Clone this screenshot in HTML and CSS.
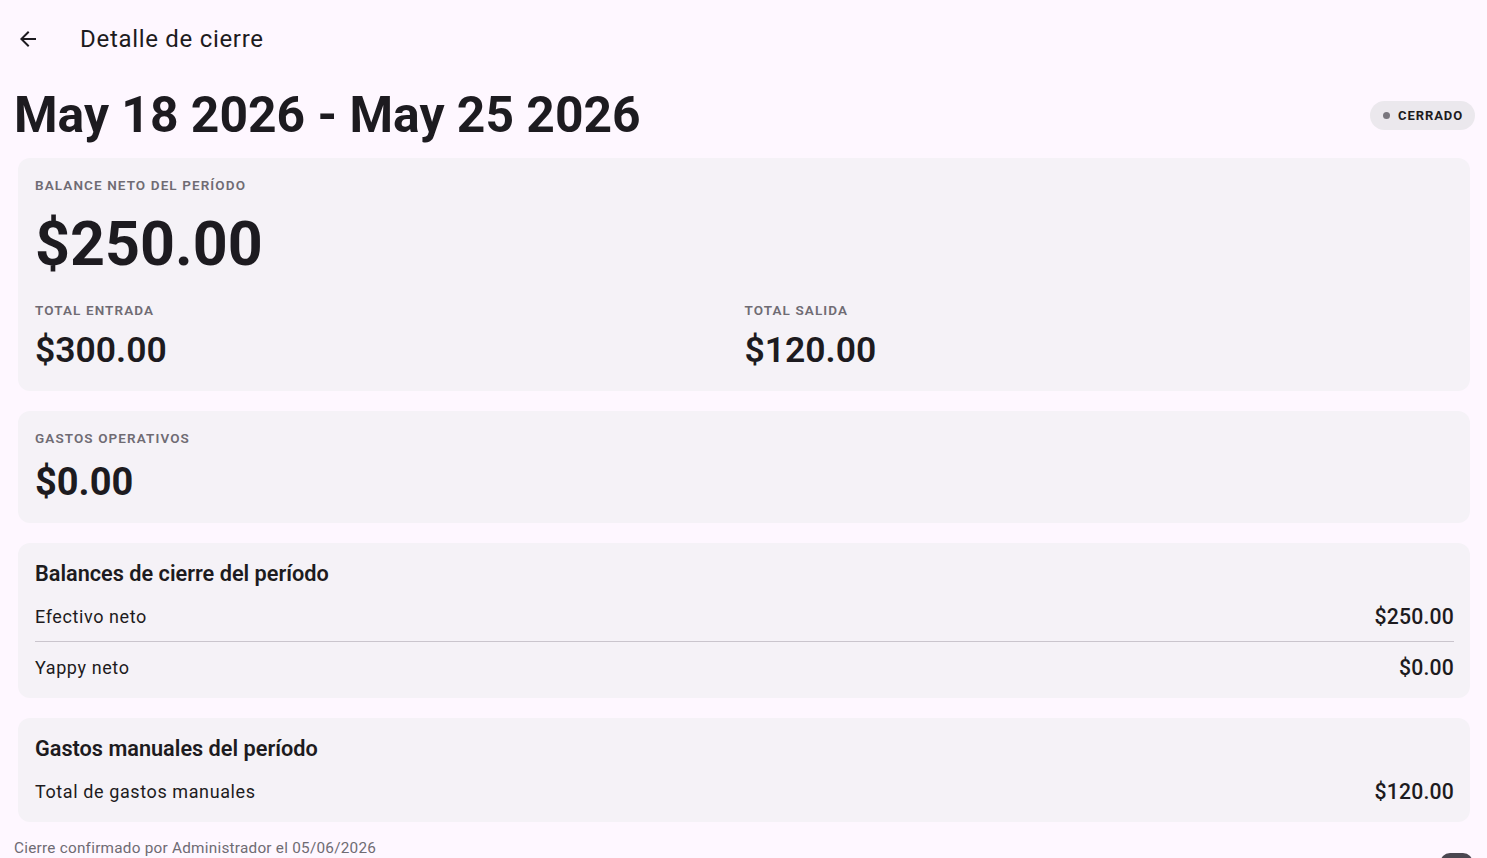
FILE: index.html
```html
<!DOCTYPE html>
<html lang="es">
<head>
<meta charset="utf-8">
<title>Detalle de cierre</title>
<link rel="stylesheet" href="styles.css">
</head>
<body>
<header class="appbar">
  <button class="back" aria-label="Volver">
    <svg width="24" height="24" viewBox="0 0 24 24"><path d="M20 11H7.83l5.59-5.59L12 4l-8 8 8 8 1.41-1.41L7.83 13H20v-2z" fill="#1d1b20"/></svg>
  </button>
  <h1 class="appbar-title">Detalle de cierre</h1>
</header>
<main class="content">
  <div class="period-row">
    <h2 class="period">May 18 2026 - May 25 2026</h2>
    <span class="badge"><span class="dot"></span>CERRADO</span>
  </div>

  <section class="card card-main">
    <div class="label">BALANCE NETO DEL PERÍODO</div>
    <div class="big-amount">$250.00</div>
    <div class="totals">
      <div class="total">
        <div class="label">TOTAL ENTRADA</div>
        <div class="mid-amount">$300.00</div>
      </div>
      <div class="total">
        <div class="label">TOTAL SALIDA</div>
        <div class="mid-amount">$120.00</div>
      </div>
    </div>
  </section>

  <section class="card card-ops">
    <div class="label">GASTOS OPERATIVOS</div>
    <div class="ops-amount">$0.00</div>
  </section>

  <section class="card card-list">
    <h3 class="card-title">Balances de cierre del período</h3>
    <div class="row"><span class="row-label">Efectivo neto</span><span class="row-value">$250.00</span></div>
    <div class="divider"></div>
    <div class="row"><span class="row-label">Yappy neto</span><span class="row-value">$0.00</span></div>
  </section>

  <section class="card card-list card-last">
    <h3 class="card-title">Gastos manuales del período</h3>
    <div class="row"><span class="row-label">Total de gastos manuales</span><span class="row-value">$120.00</span></div>
  </section>

  <p class="footer">Cierre confirmado por Administrador el 05/06/2026</p>
</main>
<div class="corner-fab"></div>
</body>
</html>
```

FILE: styles.css
```css
* { box-sizing: border-box; }
html, body {
  margin: 0;
  padding: 0;
  background: #fef7ff;
  font-family: Roboto, "Noto Sans", sans-serif;
  color: #1d1b20;
  overflow: hidden;
  height: 858px;
}
.appbar {
  height: 76px;
  display: flex;
  align-items: center;
  padding-left: 16px;
  padding-top: 1px;
}
.back {
  width: 24px;
  height: 24px;
  padding: 0;
  border: 0;
  background: none;
  display: flex;
}
.appbar-title {
  margin: 0 0 0 40px;
  font-size: 24px;
  font-weight: 400;
  letter-spacing: 0.7px;
  line-height: 28px;
}
.content {
  padding: 0 14px;
}
.period-row {
  display: flex;
  justify-content: space-between;
  align-items: center;
  height: 78px;
}
.period {
  margin: 0;
  font-size: 49.8px;
  font-weight: 700;
  line-height: 60px;
}
.badge {
  display: inline-flex;
  align-items: center;
  height: 29px;
  padding: 0 12px 0 13px;
  margin-right: -2px;
  border-radius: 15px;
  background: #ebe8ed;
  font-size: 13px;
  font-weight: 700;
  letter-spacing: 0.9px;
  color: #1d1b20;
}
.dot {
  width: 7px;
  height: 7px;
  border-radius: 50%;
  background: #79767d;
  margin-right: 8px;
}
.card {
  margin: 4px 3px 20px 4px;
  background: #f5f2f7;
  border-radius: 12px;
  padding: 17px 16px 0 17px;
}
.card-last { margin-bottom: 16px; }
.label {
  font-size: 13.5px;
  font-weight: 600;
  letter-spacing: 1.1px;
  line-height: 20px;
  color: #6f6b73;
}
.big-amount {
  font-size: 61px;
  font-weight: 700;
  line-height: 72px;
  margin-top: 13px;
}
.totals {
  display: grid;
  grid-template-columns: 1fr 1fr;
  margin-top: 20px;
}
.mid-amount {
  font-size: 35.5px;
  font-weight: 600;
  line-height: 44px;
  margin-top: 8px;
}
.card-main { height: 233px; }
.card-ops { height: 112px; }
.ops-amount {
  font-size: 38px;
  font-weight: 700;
  line-height: 44px;
  margin-top: 12px;
}
.card-title {
  margin: 0 0 3px;
  font-size: 21.7px;
  font-weight: 600;
  line-height: 28px;
}
.row {
  display: flex;
  justify-content: space-between;
  align-items: center;
  height: 50px;
  font-size: 18px;
}
.row-label { letter-spacing: 0.6px; }
.row-value { font-size: 21.2px; font-weight: 500; letter-spacing: 0.2px; }
.card-list { padding-bottom: 6px; }
.divider {
  height: 1px;
  background: #cac5cd;
}
.footer {
  margin: 0;
  font-size: 15.3px;
  color: #6f6b73;
  letter-spacing: 0.25px;
  line-height: 20px;
}
.corner-fab {
  position: absolute;
  left: 1440px;
  top: 853px;
  width: 33px;
  height: 20px;
  border-radius: 10px;
  background: #4a4750;
}
```
